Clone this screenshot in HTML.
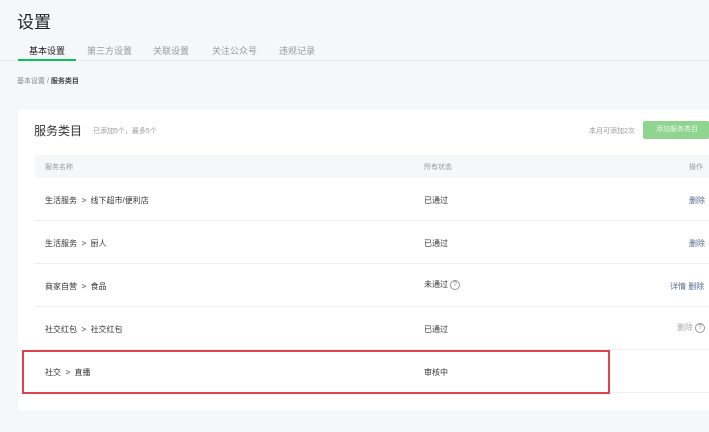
<!DOCTYPE html>
<html><head><meta charset="utf-8"><style>
*{margin:0;padding:0;box-sizing:border-box}
body{width:709px;height:432px;background:#f6f7f9;font-family:"Liberation Sans","Noto Sans CJK SC",sans-serif;position:relative;overflow:hidden;color:#353535}
.a{position:absolute;white-space:nowrap}
.card{position:absolute;left:18px;top:110px;width:700px;height:300px;background:#fff}
.row{position:absolute;left:35px;width:680px;height:43px;border-bottom:1px solid #eceef0;font-size:8px}
.row span{position:absolute;top:17px}
.q{display:inline-block;width:10px;height:10px;border:1px solid #999;border-radius:50%;font-size:7px;line-height:8px;text-align:center;color:#888;vertical-align:middle;margin-left:2px;font-style:normal}
.lk{color:#576b95}
</style></head><body>
<div class="a" style="left:17px;top:8px;font-size:17px;color:#222">设置</div>
<div class="a" style="left:0;top:60px;width:709px;height:1px;background:#e7e8eb"></div>
<div class="a" style="left:29px;top:44px;font-size:9px;color:#222">基本设置</div>
<div class="a" style="left:18px;top:59px;width:58px;height:2px;background:#07c160"></div>
<div class="a" style="left:87px;top:44px;font-size:9px;color:#999">第三方设置</div>
<div class="a" style="left:153px;top:44px;font-size:9px;color:#999">关联设置</div>
<div class="a" style="left:212px;top:44px;font-size:9px;color:#999">关注公众号</div>
<div class="a" style="left:279px;top:44px;font-size:9px;color:#999">违规记录</div>
<div class="a" style="left:17px;top:76px;font-size:7px;color:#888">基本设置 / <b style="color:#444">服务类目</b></div>
<div class="card"></div>
<div class="a" style="left:34px;top:122px;font-size:12px;color:#333">服务类目</div>
<div class="a" style="left:93px;top:126px;font-size:7px;color:#999">已添加5个，最多5个</div>
<div class="a" style="left:589px;top:126px;font-size:7px;color:#999">本月可添加2次</div>
<div class="a" style="left:643px;top:121px;width:66px;height:18px;background:#8fd48f;border-radius:2px;color:#e8f7e8;font-size:7px;line-height:18px;padding-left:13px">添加服务类目</div>
<div class="a" style="left:35px;top:155px;width:680px;height:23px;background:#f6f7f9;font-size:7px;color:#999"><span class="a" style="left:10px;top:7px">服务名称</span><span class="a" style="left:389px;top:7px">所有状态</span><span class="a" style="left:654px;top:7px">操作</span></div>
<div class="row" style="top:178px"><span style="left:10px">生活服务 &nbsp;&gt;&nbsp; 线下超市/便利店</span><span style="left:389px">已通过</span><span class="lk" style="left:654px">删除</span></div>
<div class="row" style="top:221px"><span style="left:10px">生活服务 &nbsp;&gt;&nbsp; 厨人</span><span style="left:389px">已通过</span><span class="lk" style="left:654px">删除</span></div>
<div class="row" style="top:264px"><span style="left:10px">商家自营 &nbsp;&gt;&nbsp; 食品</span><span style="left:389px;top:15px">未通过<i class="q">?</i></span><span class="lk" style="left:635px">详情 删除</span></div>
<div class="row" style="top:307px"><span style="left:10px">社交红包 &nbsp;&gt;&nbsp; 社交红包</span><span style="left:389px">已通过</span><span style="left:642px;top:15px;color:#aaa">删除<i class="q">?</i></span></div>
<div class="row" style="top:350px"><span style="left:10px">社交 &nbsp;&gt;&nbsp; 直播</span><span style="left:389px">审核中</span></div>
<div class="a" style="left:22px;top:350px;width:588px;height:44px;border:2px solid #e0424f"></div>
</body></html>
